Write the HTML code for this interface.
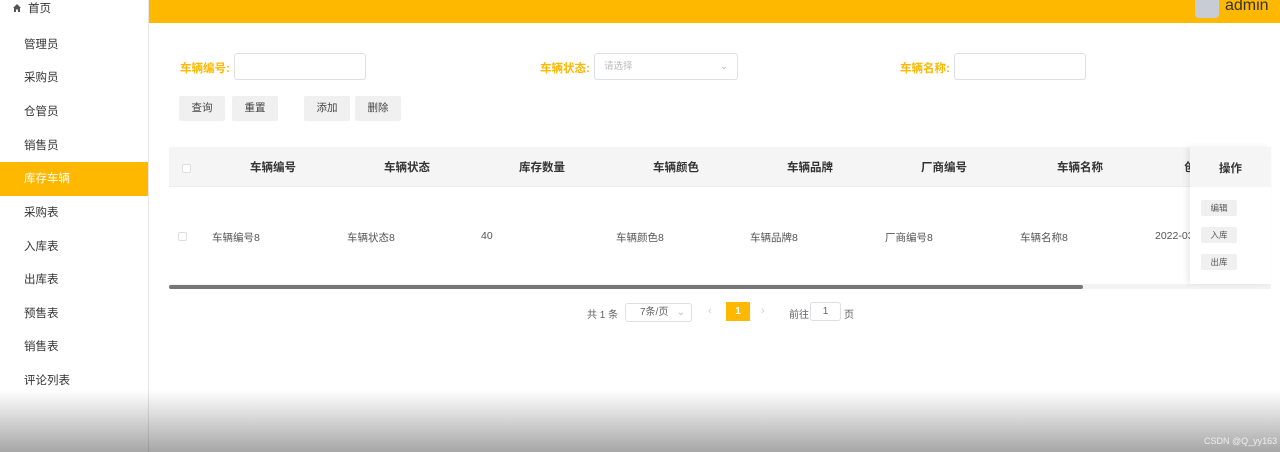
<!DOCTYPE html><html><head><meta charset="utf-8"><style>
*{margin:0;padding:0;box-sizing:border-box}
body{width:1280px;height:452px;overflow:hidden;position:relative;background:#fff;font-family:"Liberation Sans","Noto Sans CJK SC",sans-serif;font-size:11px;color:#606266}
.abs{position:absolute}
.side{left:0;top:0;width:149px;height:452px;border-right:1px solid #e6e6e6;background:#fff}
.mi{position:absolute;left:0;width:148px;height:34px;line-height:34px;padding-left:24px;font-size:11.5px;color:#333}
.mi.act{background:#FFB800;color:#fff}
.hdr{left:149px;top:0;width:1131px;height:23px;background:#FFB800}
.lbl{color:#FFB800;font-weight:bold;font-size:11.5px}
.inp{border:1px solid #dcdfe6;border-radius:3px;height:27px;background:#fff}
.btn{background:#f0f0f0;border-radius:2px;height:25px;line-height:25px;text-align:center;font-size:10.5px;color:#444}
.th{top:147px;height:40px;line-height:42px;font-weight:bold;font-size:11.5px;color:#333;text-align:center;width:120px}
.td{top:230px;font-size:10.5px;color:#555}
.sb{width:30px;height:16px;line-height:16px;font-size:8.5px;background:#f0f0f0;text-align:center;border-radius:2px;left:1201px;color:#555}
</style></head><body>
<div class="abs side">
<div class="mi" style="top:-8px;padding-left:12px"><svg width="10" height="10" viewBox="0 0 10 10" style="vertical-align:-1px;margin-right:6px"><path d="M1 5 L5 1 L9 5 L8 5 L8 9 L6 9 L6 6.5 L4 6.5 L4 9 L2 9 L2 5Z" fill="#555"/></svg>首页</div>
<div class="mi" style="top:28px">管理员</div>
<div class="mi" style="top:61px">采购员</div>
<div class="mi" style="top:95px">仓管员</div>
<div class="mi" style="top:129px">销售员</div>
<div class="mi act" style="top:162px">库存车辆</div>
<div class="mi" style="top:196px">采购表</div>
<div class="mi" style="top:230px">入库表</div>
<div class="mi" style="top:263px">出库表</div>
<div class="mi" style="top:297px">预售表</div>
<div class="mi" style="top:330px">销售表</div>
<div class="mi" style="top:364px">评论列表</div>
</div>
<div class="abs hdr"></div>
<div class="abs" style="left:1195px;top:-6px;width:24px;height:24px;background:#c8ccd4;border-radius:4px"></div>
<div class="abs" style="left:1225px;top:-3px;font-size:16px;color:#333">admin</div>

<div class="abs lbl" style="left:180px;top:60px">车辆编号:</div>
<div class="abs inp" style="left:234px;top:53px;width:132px"></div>
<div class="abs lbl" style="left:540px;top:60px">车辆状态:</div>
<div class="abs inp" style="left:594px;top:53px;width:144px;font-size:9.5px;color:#bbb;line-height:25px;padding-left:9px">请选择<span style="position:absolute;right:9px;color:#bbb">⌄</span></div>
<div class="abs lbl" style="left:900px;top:60px">车辆名称:</div>
<div class="abs inp" style="left:954px;top:53px;width:132px"></div>

<div class="abs btn" style="left:179px;top:96px;width:46px">查询</div>
<div class="abs btn" style="left:232px;top:96px;width:46px">重置</div>
<div class="abs btn" style="left:304px;top:96px;width:46px">添加</div>
<div class="abs btn" style="left:355px;top:96px;width:46px">删除</div>

<div class="abs" style="left:169px;top:147px;width:1102px;height:40px;background:#f5f5f5;border-bottom:1px solid #ebeef5"></div>
<div class="abs" style="left:182px;top:164px;width:9px;height:9px;border:1px solid #ddd;background:#fff;border-radius:2px"></div>
<div class="abs th" style="left:213px">车辆编号</div>
<div class="abs th" style="left:347px">车辆状态</div>
<div class="abs th" style="left:482px">库存数量</div>
<div class="abs th" style="left:616px">车辆颜色</div>
<div class="abs th" style="left:750px">车辆品牌</div>
<div class="abs th" style="left:884px">厂商编号</div>
<div class="abs th" style="left:1020px">车辆名称</div>
<div class="abs th" style="left:1130px">创</div>
<div class="abs" style="left:178px;top:232px;width:9px;height:9px;border:1px solid #ddd;border-radius:2px"></div>
<div class="abs td" style="left:212px">车辆编号8</div>
<div class="abs td" style="left:347px">车辆状态8</div>
<div class="abs td" style="left:481px">40</div>
<div class="abs td" style="left:616px">车辆颜色8</div>
<div class="abs td" style="left:750px">车辆品牌8</div>
<div class="abs td" style="left:885px">厂商编号8</div>
<div class="abs td" style="left:1020px">车辆名称8</div>
<div class="abs td" style="left:1155px">2022-03</div>
<div class="abs" style="left:169px;top:284px;width:1102px;height:5px;background:#f3f3f3"></div>
<div class="abs" style="left:169px;top:285px;width:914px;height:4px;background:#777;border-radius:2px"></div>
<div class="abs" style="left:1190px;top:147px;width:81px;height:137px;background:#fff;box-shadow:-3px 0 6px rgba(0,0,0,.08)"></div>
<div class="abs" style="left:1190px;top:147px;width:81px;height:40px;background:#f5f5f5;line-height:44px;text-align:center;font-weight:bold;font-size:11.5px;color:#333">操作</div>
<div class="abs sb" style="top:200px;width:36px">编辑</div>
<div class="abs sb" style="top:227px;width:36px">入库</div>
<div class="abs sb" style="top:254px;width:36px">出库</div>

<div class="abs" style="left:587px;top:306px;font-size:10px">共 1 条</div>
<div class="abs inp" style="left:625px;top:303px;width:67px;height:19px;line-height:17px;font-size:10px;padding-left:14px">7条/页<span style="position:absolute;right:6px;color:#bbb">⌄</span></div>
<div class="abs" style="left:708px;top:305px;color:#ccc">‹</div>
<div class="abs" style="left:726px;top:302px;width:24px;height:19px;background:#FFB800;color:#fff;font-weight:bold;text-align:center;line-height:19px;font-size:10px">1</div>
<div class="abs" style="left:761px;top:305px;color:#ccc">›</div>
<div class="abs" style="left:789px;top:306px;font-size:10px">前往</div>
<div class="abs inp" style="left:810px;top:302px;width:31px;height:19px;line-height:17px;text-align:center;font-size:10px">1</div>
<div class="abs" style="left:844px;top:306px;font-size:10px">页</div>

<div class="abs" style="left:0;top:390px;width:1280px;height:62px;background:linear-gradient(rgba(0,0,0,0),rgba(0,0,0,.35))"></div>
<div class="abs" style="left:1204px;top:436px;font-size:9px;color:#eee">CSDN @Q_yy163</div>
</body></html>
